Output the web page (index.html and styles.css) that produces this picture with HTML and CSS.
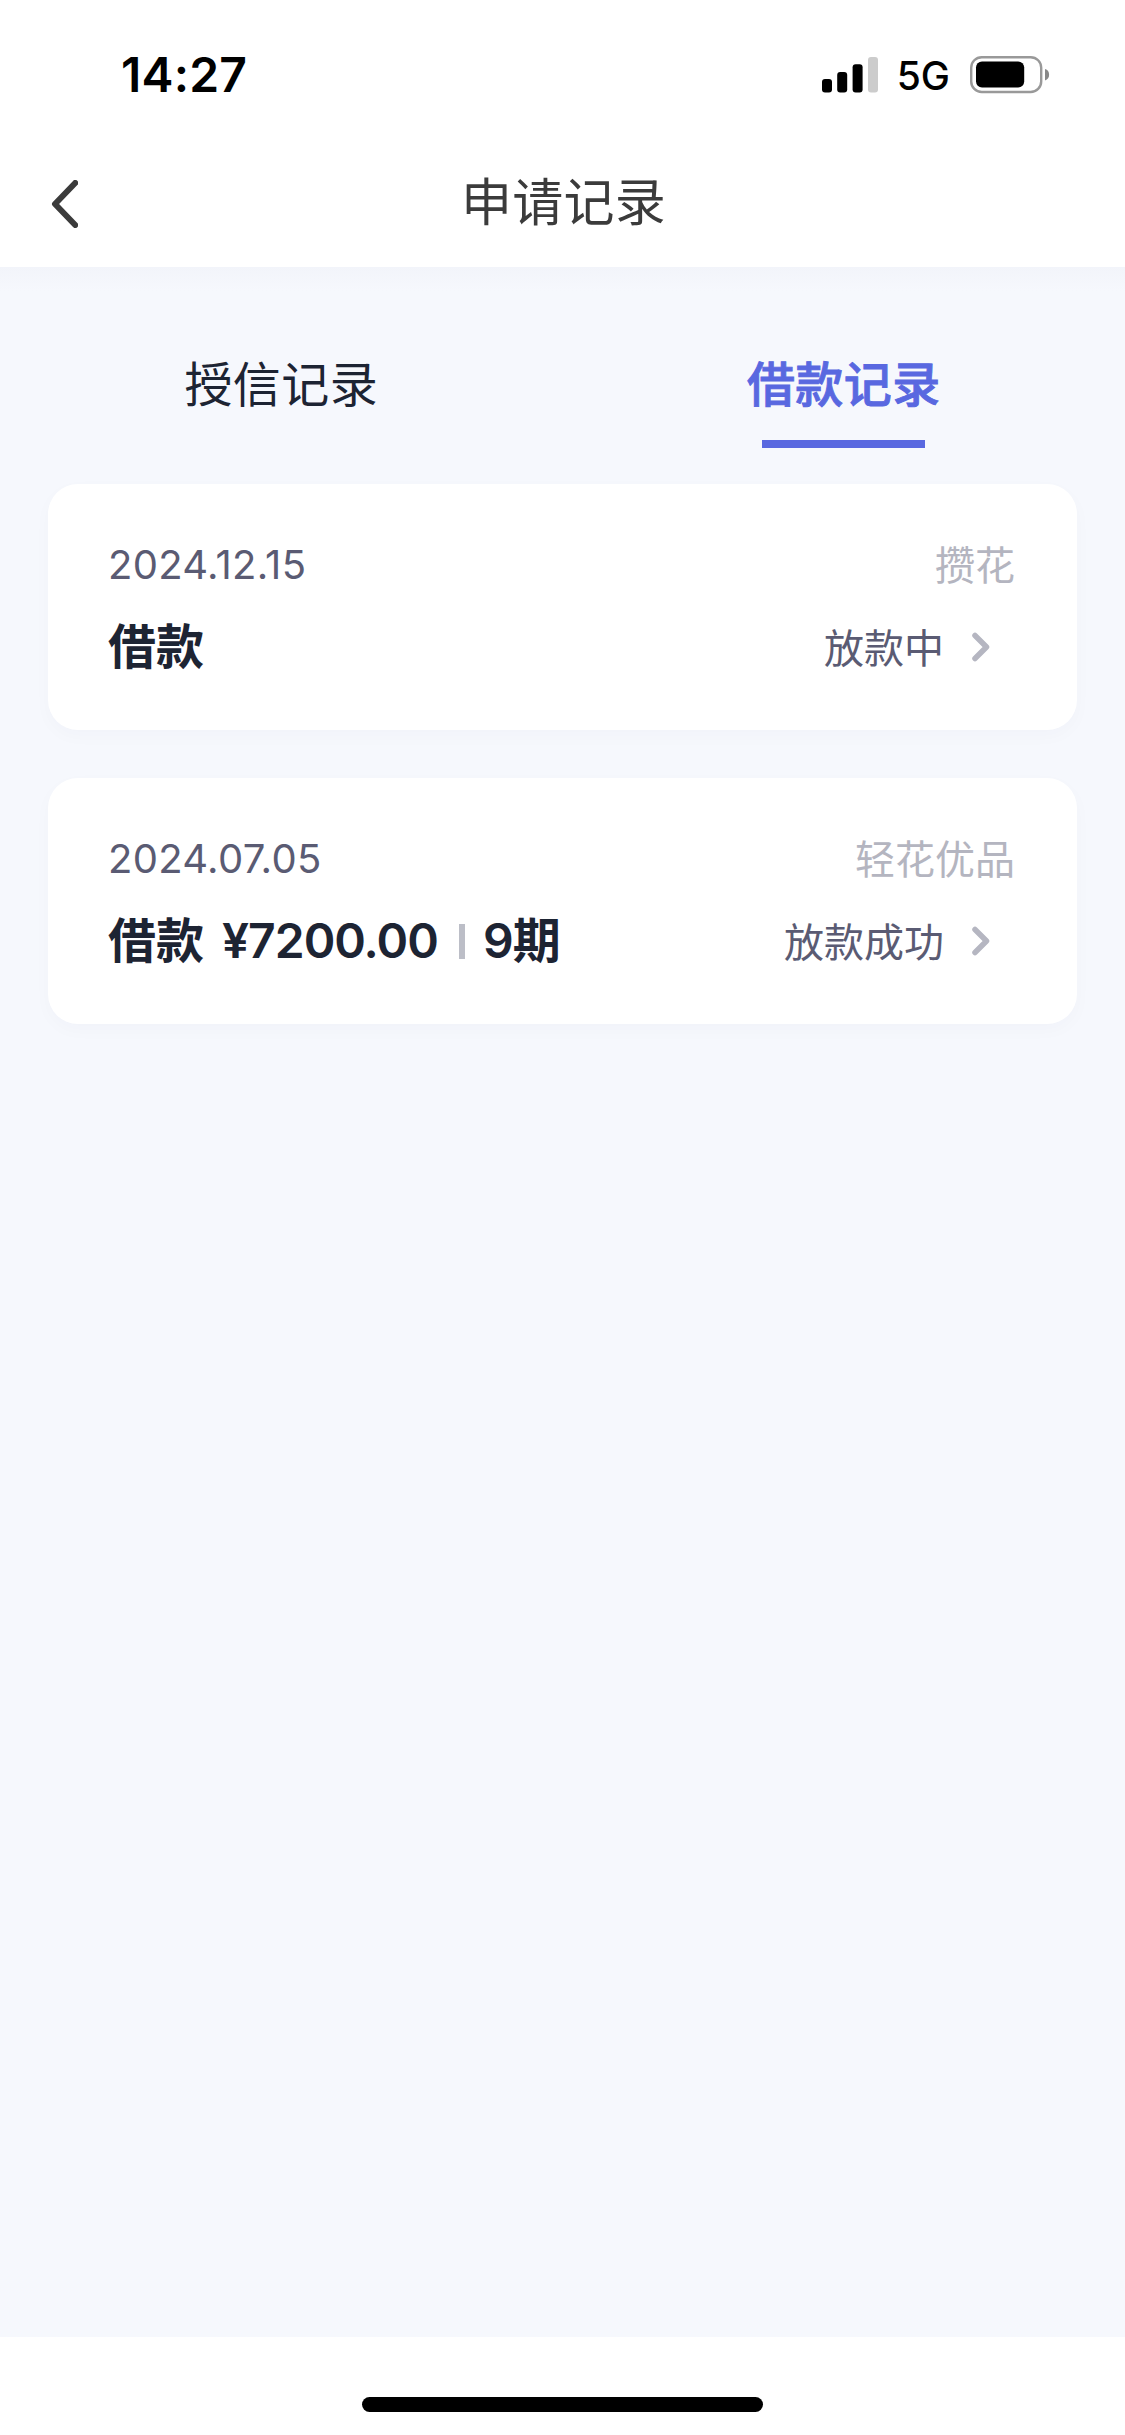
FILE: index.html
```html
<!DOCTYPE html>
<html lang="zh-CN">
<head>
<meta charset="utf-8">
<title>申请记录</title>
<link rel="stylesheet" href="styles.css">
</head>
<body>
<div class="screen">
  <div class="status-bar">
    <span class="status-time">14:27</span>
    <div class="status-icons">
      <svg class="signal" width="56" height="36" viewBox="0 0 56 36">
        <rect x="0" y="22" width="10" height="13.5" rx="3"/>
        <rect x="15.2" y="15" width="10" height="20.5" rx="3"/>
        <rect x="30.6" y="7.3" width="10" height="28.2" rx="3"/>
        <rect x="46" y="0" width="10" height="35.5" rx="3" fill="#ccc"/>
      </svg>
      <span class="network">5G</span>
      <svg class="battery" width="80" height="38" viewBox="0 0 80 38">
        <rect x="1.2" y="1.2" width="70" height="34.8" rx="10.5" fill="none" stroke="#999" stroke-width="2.4"/>
        <rect x="6" y="5.6" width="48.2" height="26" rx="6"/>
        <path d="M75 13a6 6 0 0 1 0 11.400z" fill="#888"/>
      </svg>
    </div>
  </div>
  <header class="nav-bar">
    <svg class="back" width="27" height="48" viewBox="0 0 27 48"><path d="M24.200 3L4 24L24.200 45"/></svg>
    <h1 class="nav-title">申请记录</h1>
  </header>
  <main class="content">
    <nav class="tabs">
      <a class="tab">授信记录</a>
      <a class="tab tab-active">借款记录</a>
    </nav>
    <section class="records">
      <article class="card">
        <div class="row"><span class="date">2024.12.15</span><span class="product">攒花</span></div>
        <div class="row">
          <div class="summary"><span>借款</span></div>
          <div class="state"><span class="state-label">放款中</span><svg class="arrow" width="18" height="30" viewBox="0 0 18 30"><path d="M3 3.500L14.500 15L3 26.500"/></svg></div>
        </div>
      </article>
      <article class="card">
        <div class="row"><span class="date">2024.07.05</span><span class="product">轻花优品</span></div>
        <div class="row">
          <div class="summary"><span>借款</span><span class="amount">¥7200.00</span><i class="divider"></i><span class="term">9期</span></div>
          <div class="state"><span class="state-label">放款成功</span><svg class="arrow" width="18" height="30" viewBox="0 0 18 30"><path d="M3 3.500L14.500 15L3 26.500"/></svg></div>
        </div>
      </article>
    </section>
  </main>
  <footer class="home-area"><div class="home-indicator"></div></footer>
</div>
</body>
</html>
```
FILE: styles.css
```css
* { box-sizing: border-box; }
body {
  margin: 0;
  background: #fff;
  font-family: Inter, "Noto Sans CJK SC", sans-serif;
  color: #1d2433;
}
.screen {
  width: 1125px;
  height: 2435px;
  display: flex;
  flex-direction: column;
}
.status-bar {
  height: 141px;
  padding: 45px 75px 0 121px;
  display: flex;
  justify-content: space-between;
  align-items: flex-start;
  color: #000;
}
.status-time {
  font-size: 48px;
  font-weight: 600;
  line-height: 60px;
  letter-spacing: 0.2px;
}
.status-icons {
  display: flex;
  align-items: center;
  height: 60px;
}
.network {
  margin: 2px 20px 0 19px;
  font-size: 39px;
  font-weight: 500;
  line-height: 60px;
}
.nav-bar {
  height: 126px;
  padding: 0 51px;
  display: grid;
  grid-template-columns: 27px 1fr 27px;
  align-items: center;
}
.back { fill: none; stroke: #3b3b3b; stroke-width: 6; stroke-linecap: round; stroke-linejoin: round; }
.nav-title {
  margin: 0 0 3px 2px;
  font-size: 51px;
  font-weight: 400;
  line-height: 60px;
  letter-spacing: 0.2px;
  text-align: center;
  color: #3b3b3b;
}
.content {
  height: 2070px;
  background: linear-gradient(#f2f4fa, #f6f8fd 24px);
}
.tabs {
  height: 217px;
  padding-top: 82px;
  display: grid;
  grid-template-columns: 1fr 1fr;
  align-items: start;
  justify-items: center;
}
.tab {
  display: flex;
  flex-direction: column;
  align-items: center;
  font-size: 48px;
  line-height: 72px;
  letter-spacing: 0.4px;
}
.tab-active { color: #5968e0; font-weight: 500; -webkit-text-stroke: 0.9px #5968e0; }
.tab-active::after {
  content: "";
  width: 163px;
  height: 8px;
  margin-top: 19px;
  background: #5968e0;
}
.records {
  padding: 0 48px;
  display: grid;
  gap: 48px;
}
.card {
  height: 246px;
  padding: 51px 62px 0 60px;
  display: grid;
  grid-template-rows: 60px 60px;
  row-gap: 22px;
  background: #fff;
  border-radius: 30px;
  box-shadow: 0 6px 18px rgba(40, 50, 90, 0.025);
}
.row {
  display: flex;
  justify-content: space-between;
  align-items: center;
  line-height: 60px;
}
.date { font-size: 40px; letter-spacing: 0.3px; color: #5a5b73; }
.product { padding-top: 1px; font-size: 40px; color: #b4b5c0; }
.summary {
  display: flex;
  align-items: center;
  font-size: 48px;
  font-weight: 600;
}
.amount { margin-left: 18px; letter-spacing: -1px; }
.divider {
  width: 6px;
  height: 35px;
  margin: 0 18px 0 21px;
  background: #bcbec7;
}
.term { letter-spacing: -1px; }
.state {
  display: flex;
  align-items: center;
  gap: 28px;
  padding-right: 25px;
  font-size: 40px;
  color: #5a5b73;
}
.state-label { padding-top: 3px; }
.arrow { fill: none; stroke: #b5b6c1; stroke-width: 5.5; stroke-linecap: round; stroke-linejoin: round; }
.home-area {
  height: 98px;
  padding-top: 60px;
  display: flex;
  justify-content: center;
}
.home-indicator {
  width: 401px;
  height: 15px;
  border-radius: 8px;
  background: #000;
}
```
